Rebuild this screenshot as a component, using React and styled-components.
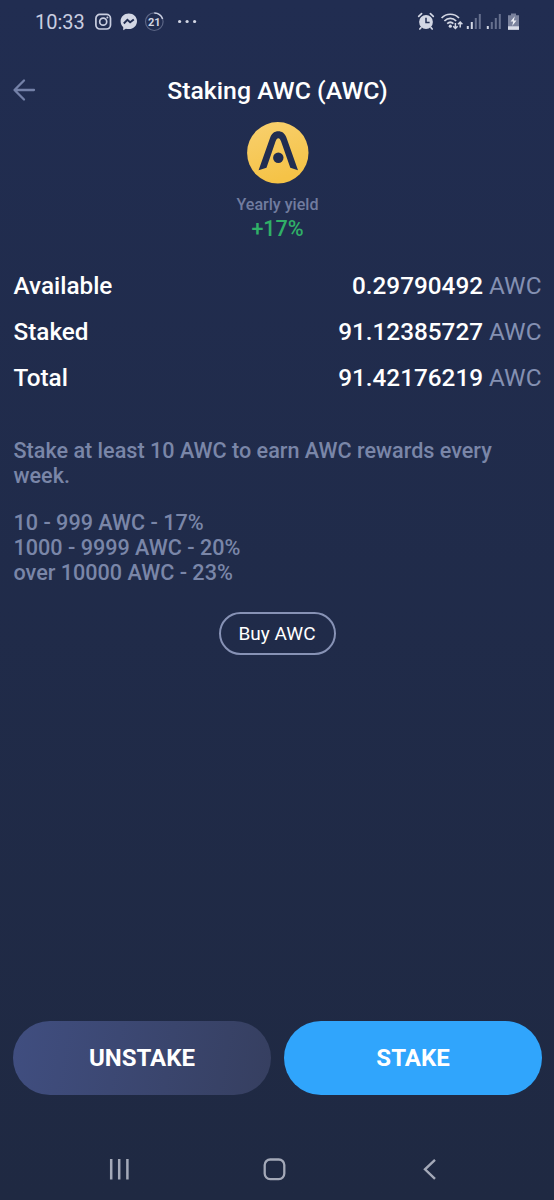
import React from "react";
import styled, { createGlobalStyle } from "styled-components";

const balances = [
  { label: "Available", amount: "0.29790492" },
  { label: "Staked", amount: "91.12385727" },
  { label: "Total", amount: "91.42176219" },
];

const tiers = ["10 - 999 AWC - 17%", "1000 - 9999 AWC - 20%", "over 10000 AWC - 23%"];

const StatusIcons = () => (
  <svg width="104" height="20" viewBox="0 0 104 20" fill="none">
    {/* instagram */}
    <g stroke="#c9cee0" strokeWidth="1.7">
      <rect x="1.9" y="2.4" width="14.6" height="14.6" rx="4" />
      <circle cx="9.2" cy="9.7" r="3.5" />
    </g>
    <circle cx="13.4" cy="5.5" r="1" fill="#c9cee0" />
    {/* messenger */}
    <path
      d="M34.8 1.6c-4.7 0-8.2 3.3-8.2 7.7 0 2.4 1 4.4 2.6 5.8v3.1l2.7-1.5c.9.3 1.9.4 2.9.4 4.7 0 8.2-3.4 8.2-7.8s-3.5-7.7-8.2-7.7z"
      fill="#d3d7e4"
    />
    <path d="M29.8 11.5l3.6-3.6 2.7 2.3 3.7-2.7" stroke="#212d51" strokeWidth="1.9" />
    {/* notification counter */}
    <circle cx="60.3" cy="9.7" r="8.8" stroke="#5b6585" strokeWidth="1.2" />
    <path d="M60.3 0.9a8.8 8.8 0 0 1 8.3 6" stroke="#c9cee0" strokeWidth="1.5" />
    <text x="60.2" y="13.6" textAnchor="middle" fontSize="11" fontWeight="700" fill="#d3d7e4">
      21
    </text>
    <g fill="#d3d7e4">
      <circle cx="85.6" cy="9.5" r="1.6" />
      <circle cx="93.1" cy="9.5" r="1.6" />
      <circle cx="100.6" cy="9.5" r="1.6" />
    </g>
  </svg>
);

const SystemIcons = () => (
  <svg width="104" height="20" viewBox="0 0 104 20" fill="none">
    {/* alarm */}
    <circle cx="9" cy="10" r="6.9" fill="#d3d7e4" />
    <g stroke="#d3d7e4" strokeWidth="1.7" strokeLinecap="round">
      <path d="M1.7 4.3l2.9-2.7M16.3 4.3l-2.9-2.7M4 15.7l-1.2 1.3M14 15.7l1.2 1.3" />
    </g>
    <path d="M9 5.7v4.7h3.6" stroke="#212d51" strokeWidth="1.5" />
    {/* wifi */}
    <g stroke="#d3d7e4" strokeWidth="1.7">
      <path d="M24.6 6c4.8-5 12.6-5 17.4 0" />
      <path d="M27.4 9c3.4-3.4 8.4-3.4 11.8 0" />
      <path d="M30.2 11.7c1.9-1.8 4.3-1.8 6.2 0" />
    </g>
    <circle cx="33.3" cy="14.2" r="1.6" fill="#d3d7e4" />
    <path
      d="M38.4 11v5.5m-2.2-2.2l2.2 2.2 2.2-2.2M43.2 15.5v-5.5m-2.2 2.2l2.2-2.2 2.2 2.2"
      stroke="#d3d7e4"
      strokeWidth="1.5"
    />
    {/* mobile signal, two sims */}
    <g fill="#d3d7e4">
      <rect x="49.8" y="14" width="2" height="3" />
      <rect x="53.8" y="10" width="2" height="7" />
      <rect x="69.8" y="14" width="2" height="3" />
    </g>
    <g fill="#66708e">
      <rect x="57.8" y="6" width="2" height="11" />
      <rect x="61.8" y="2" width="2" height="15" />
      <rect x="73.8" y="10" width="2" height="7" />
      <rect x="77.8" y="6" width="2" height="11" />
      <rect x="81.8" y="2" width="2" height="15" />
    </g>
    {/* battery */}
    <path d="M94 1.5h5v1.8h3V17.5H91V3.3h3z" fill="#7a829d" />
    <rect x="91" y="14.3" width="11" height="3.5" fill="#d9dce8" />
    <path d="M97.8 4.3l-4.2 5.3h2.6l-1 4.3 4.3-5.4h-2.7z" fill="#eef0f6" />
  </svg>
);

const BackArrow = () => (
  <svg width="24" height="24" viewBox="0 0 24 24" fill="none">
    <path
      d="M12 2.500L2.500 12l9.500 9.500M3 12H22"
      stroke="#7481a8"
      strokeWidth="2.3"
      strokeLinecap="round"
      strokeLinejoin="round"
    />
  </svg>
);

const CoinLogo = () => (
  <svg width="62" height="62" viewBox="0 0 62 62">
    <defs>
      <linearGradient id="coin" x1="0" y1="0" x2="0.3" y2="1">
        <stop offset="0" stopColor="#f8d06f" />
        <stop offset="1" stopColor="#f5c347" />
      </linearGradient>
    </defs>
    <circle cx="30.8" cy="30.8" r="30.7" fill="url(#coin)" />
    <path
      d="M11.6 48.3L23.2 15.6C24.8 11.3 27.6 9.3 31.3 9.3s6.5 2 8.1 6.3L51 48.3l-7.700-2.600-9.300-26.400c-.8-2.200-1.500-3.100-2.700-3.100s-1.900.9-2.700 3.100L19.500 45.700z"
      fill="#212d51"
    />
    <circle cx="31.3" cy="35.7" r="5.2" fill="#212d51" />
  </svg>
);

const App = () => (
  <Screen>
    <GlobalStyle />
    <StatusBar>
      <Clock>10:33</Clock>
      <StatusIcons />
      <Spacer />
      <SystemIcons />
    </StatusBar>
    <Header>
      <BackButton aria-label="Back">
        <BackArrow />
      </BackButton>
      <Title>Staking AWC (AWC)</Title>
    </Header>
    <Yield>
      <CoinLogo />
      <YieldLabel>Yearly yield</YieldLabel>
      <YieldValue>+17%</YieldValue>
    </Yield>
    <Balances>
      {balances.map(({ label, amount }) => (
        <BalanceRow key={label}>
          <span>{label}</span>
          <span>
            {amount} <Ticker>AWC</Ticker>
          </span>
        </BalanceRow>
      ))}
    </Balances>
    <Info>
      <p>Stake at least 10 AWC to earn AWC rewards every week.</p>
      <ul>
        {tiers.map((tier) => (
          <li key={tier}>{tier}</li>
        ))}
      </ul>
    </Info>
    <BuyButton>Buy AWC</BuyButton>
    <Actions>
      <ActionButton>UNSTAKE</ActionButton>
      <ActionButton $primary>STAKE</ActionButton>
    </Actions>
    <NavBar>
      <svg width="24" height="24" viewBox="0 0 24 24">
        <path d="M4.2 2v20.5M12.2 2v20.5M20.4 2v20.5" stroke="#a4a9b8" strokeWidth="2.5" />
      </svg>
      <svg width="24" height="24" viewBox="0 0 24 24" fill="none">
        <rect x="1.7" y="2.5" width="19.6" height="19.6" rx="5.5" stroke="#a4a9b8" strokeWidth="2.3" />
      </svg>
      <svg width="24" height="24" viewBox="0 0 24 24" fill="none">
        <path d="M17 2.8L7 12.3l10 9.5" stroke="#a4a9b8" strokeWidth="2.4" />
      </svg>
    </NavBar>
  </Screen>
);

const GlobalStyle = createGlobalStyle`
  * {
    box-sizing: border-box;
  }
  body {
    margin: 0;
    background: #1f2942;
    font-family: Roboto, sans-serif;
  }
  button {
    font-family: inherit;
    border: none;
    background: none;
    padding: 0;
    color: #fff;
  }
`;

const Screen = styled.div`
  display: flex;
  flex-direction: column;
  height: 1200px;
  color: #fff;
  background: linear-gradient(#212d51, #1f2942);
`;

const StatusBar = styled.div`
  display: flex;
  align-items: center;
  height: 43px;
  padding: 0 33px 0 35px;
`;

const Clock = styled.span`
  width: 59px;
  font-size: 20px;
  line-height: 24px;
  color: #c9cee0;
`;

const Spacer = styled.div`
  flex: 1;
`;

const Header = styled.header`
  display: grid;
  grid-template-columns: 24px 1fr 24px;
  align-items: center;
  height: 78px;
  padding: 16px 12px 0;
`;

const BackButton = styled.button`
  display: flex;
`;

const Title = styled.h1`
  margin: 2px 0 0 1px;
  text-align: center;
  font-size: 24.8px;
  font-weight: 500;
  line-height: 30px;
`;

const Yield = styled.section`
  display: flex;
  flex-direction: column;
  align-items: center;
  padding: 1px 0 0 1px;
`;

const YieldLabel = styled.span`
  margin-top: 11px;
  font-size: 16.1px;
  font-weight: 500;
  line-height: 20px;
  color: #717c9f;
`;

const YieldValue = styled.span`
  font-size: 21.5px;
  font-weight: 500;
  line-height: 28px;
  color: #30b067;
`;

const Balances = styled.section`
  margin-top: 20px;
  padding: 0 12.5px 0 13.5px;
`;

const BalanceRow = styled.div`
  display: flex;
  justify-content: space-between;
  font-size: 24.3px;
  font-weight: 500;
  line-height: 46px;
`;

const Ticker = styled.span`
  font-weight: 400;
  color: #8490b2;
`;

const Info = styled.section`
  margin-top: 37px;
  padding: 0 40px 0 13.5px;
  font-size: 21.6px;
  font-weight: 500;
  line-height: 25px;
  color: #7a86a8;

  p {
    margin: 0 0 22px;
  }
  ul {
    margin: 0;
    padding: 0;
    list-style: none;
  }
`;

const BuyButton = styled.button`
  align-self: center;
  width: 117px;
  height: 43px;
  margin-top: 27px;
  border: 2px solid #8792b5;
  border-radius: 22px;
  font-size: 19px;
`;

const Actions = styled.div`
  display: flex;
  gap: 13px;
  margin-top: auto;
  padding: 0 12px 0 13px;
`;

const ActionButton = styled.button`
  flex: 1;
  height: 74px;
  border-radius: 37px;
  font-size: 24px;
  font-weight: 700;
  background: ${({ $primary }) =>
    $primary ? "#30a5fc" : "linear-gradient(100deg, #404e80, #363f60)"};
`;

const NavBar = styled.nav`
  display: flex;
  justify-content: space-between;
  align-items: center;
  height: 62px;
  margin-top: 43px;
  padding: 0 112px 0 107px;
`;

export default App;
